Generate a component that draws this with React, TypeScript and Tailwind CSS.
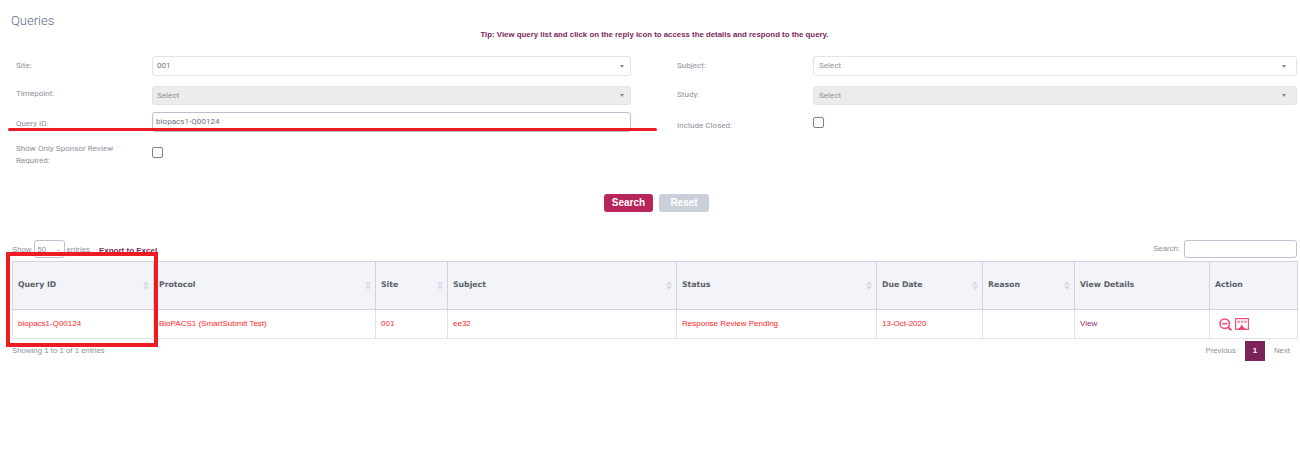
const columns = [
  { name: "Query ID", width: "w-[141px]", sort: true },
  { name: "Protocol", width: "w-[222px]", sort: true },
  { name: "Site", width: "w-[72px]", sort: true },
  { name: "Subject", width: "w-[229px]", sort: true },
  { name: "Status", width: "w-[200px]", sort: true },
  { name: "Due Date", width: "w-[106px]", sort: true },
  { name: "Reason", width: "w-[92px]", sort: true },
  { name: "View Details", width: "w-[135px]", sort: false },
  { name: "Action", width: "w-[88px]", sort: false },
];

const row = ["biopacs1-Q00124", "BioPACS1 (SmartSubmit Test)", "001", "ee32", "Response Review Pending", "13-Oct-2020", ""];

function SelectBox({ value, disabled, muted, wide }: { value: string; disabled?: boolean; muted?: boolean; wide?: boolean }) {
  return (
    <div
      className={`flex h-full items-center justify-between rounded-[3px] border border-[#e1e3e8] text-[8px] ${
        disabled ? "bg-[#ececec]" : "bg-white"
      } ${muted ? "text-[#8b909a]" : "text-[#6d7280]"} ${wide ? "pl-[5px] pr-[10px]" : "pl-[4px] pr-[6px]"}`}
    >
      <span>{value}</span>
      <span className="h-0 w-0 border-x-[2.5px] border-t-[3px] border-x-transparent border-t-[#888]" />
    </div>
  );
}

function CheckBox() {
  return <div className="h-[11px] w-[11px] rounded-[2px] border border-[#7b818c] bg-white" />;
}

function SortArrows() {
  return (
    <span className="flex flex-col gap-[1px]">
      <span className="h-0 w-0 border-x-[3px] border-b-[4px] border-x-transparent border-b-[#d9dce2]" />
      <span className="h-0 w-0 border-x-[3px] border-t-[4px] border-x-transparent border-t-[#d9dce2]" />
    </span>
  );
}

function ZoomOutIcon() {
  return (
    <svg width="13" height="13" viewBox="0 0 13 13" fill="none" stroke="#ee4d75">
      <circle cx="5.7" cy="5.7" r="4.7" strokeWidth="1.6" />
      <path d="M3.2 5.7h5" strokeWidth="1.6" />
      <path d="M9 9l3.200 3.200" strokeWidth="2.2" />
    </svg>
  );
}

function PdfIcon() {
  return (
    <svg width="14" height="12" viewBox="0 0 14 12">
      <rect width="14" height="12" fill="#f0517a" />
      <rect x="1.200" y="1.200" width="11.600" height="9.600" fill="#fff" />
      <path d="M2.500 2.500h2.500v2.500H2.500zM5.800 2.500h2.500v2.500H5.800zM9.100 2.500h2.500v2.500H9.100z" fill="#f49ab3" />
      <path d="M2.500 11c2.300-.7 3.500-2.500 4.200-5 .8 2.500 2.300 4.300 4.800 5z" fill="#ee3f6c" />
    </svg>
  );
}

export default function App() {
  return (
    <div className="relative h-[467px] w-[1300px] overflow-hidden bg-white font-['Roboto',sans-serif]">
      <h1 className="pl-[11px] pt-[13px] text-[13px] font-light leading-[16px] text-[#5b6b8c]">Queries</h1>
      <p className="pl-[9px] text-center font-['Liberation_Sans',sans-serif] text-[7.840px] font-bold leading-[12px] text-[#7b1f5e]">
        Tip: View query list and click on the reply icon to access the details and respond to the query.
      </p>

      <div className="mt-[15px] grid grid-cols-[136px_479px_46px_136px_484px] grid-rows-[30px_26px_34px_34px] pl-[16px] text-[8px] tracking-[0.05px] text-[#8a8f99]">
        <label className="pt-[5px] leading-[10px]">Site:</label>
        <div className="h-[20px]">
          <SelectBox value="001" />
        </div>
        <span />
        <label className="pt-[5px] leading-[10px]">Subject:</label>
        <div className="h-[20px]">
          <SelectBox value="Select" muted wide />
        </div>

        <label className="pt-[3px] leading-[10px]">Timepoint:</label>
        <div className="h-[19px]">
          <SelectBox value="Select" disabled muted />
        </div>
        <span />
        <label className="pt-[4px] leading-[10px]">Study:</label>
        <div className="h-[19px]">
          <SelectBox value="Select" disabled muted wide />
        </div>

        <label className="pt-[7px] leading-[10px]">Query ID:</label>
        <div className="flex h-[20px] items-center rounded-[3px] border border-[#b9c0d0] pl-[3px] text-[8px] text-[#6d7280]">
          biopacs1-Q00124
        </div>
        <span />
        <label className="pt-[9px] leading-[10px]">Include Closed:</label>
        <div className="pt-[5px]">
          <CheckBox />
        </div>

        <label className="mt-[-3px] w-[100px] leading-[12px]">Show Only Sponsor Review Required:</label>
        <div className="pt-[1px]">
          <CheckBox />
        </div>
      </div>

      <div className="mt-[14px] flex justify-center gap-[6px] pl-[13px] font-['Liberation_Sans',sans-serif] text-[10px] font-bold leading-[18px] text-white">
        <button className="h-[18px] w-[49px] rounded-[3px] bg-[#b8255a]">Search</button>
        <button className="h-[18px] w-[50px] rounded-[3px] bg-[#c9d0da]">Reset</button>
      </div>

      <div className="mt-[28px] flex h-[18px] items-center justify-between pl-[12px] pr-[3px] font-['Liberation_Sans',sans-serif] text-[7.800px] text-[#8a8f99]">
        <div className="flex items-center">
          <span className="pt-[1px]">Show</span>
          <div className="ml-[2px] flex h-[18px] w-[31px] items-center justify-between rounded-[3px] border border-[#bcc3d0] px-[3px] pt-[1px]">
            <span>50</span>
            <span className="text-[6px]">⌄</span>
          </div>
          <span className="ml-[2px] pt-[1px]">entries</span>
          <span className="ml-[9px] pt-[3px] text-[8px] font-bold text-[#7b1f5e]">Export to Excel</span>
        </div>
        <div className="flex items-center gap-[4px]">
          <span>Search:</span>
          <div className="h-[18px] w-[113px] rounded-[3px] border border-[#bcc3d0]" />
        </div>
      </div>

      <table className="ml-[12px] mt-[3px] w-[1285px] table-fixed border-collapse text-[8px]">
        <thead>
          <tr className="h-[48px] bg-[#f2f4f9]">
            {columns.map((c) => (
              <th
                key={c.name}
                className={`${c.width} border border-[#cfd3dd] pb-[1px] pl-[5px] pr-[4px] text-left font-['DejaVu_Sans',sans-serif] text-[7.750px] font-bold text-[#5a5e68]`}
              >
                <div className="flex items-center justify-between">
                  <span>{c.name}</span>
                  {c.sort && <SortArrows />}
                </div>
              </th>
            ))}
          </tr>
        </thead>
        <tbody>
          <tr className="h-[29px] font-['Liberation_Sans',sans-serif] text-[#ff1f1f]">
            {row.map((cell, i) => (
              <td key={i} className="border border-[#dfe2e9] px-[5px]">
                {cell}
              </td>
            ))}
            <td className="border border-[#dfe2e9] px-[5px] text-[#8c2b6b]">View</td>
            <td className="border border-[#dfe2e9] px-[9px]">
              <div className="flex items-center gap-[3px]">
                <ZoomOutIcon />
                <PdfIcon />
              </div>
            </td>
          </tr>
        </tbody>
      </table>

      <div className="mt-[2px] flex items-center justify-between pl-[12px] pr-[10px] font-['Liberation_Sans',sans-serif] text-[7.840px] text-[#8a8f99]">
        <span>Showing 1 to 1 of 1 entries</span>
        <div className="flex items-center">
          <span>Previous</span>
          <span className="mx-[9px] flex h-[20px] w-[20px] items-center justify-center bg-[#7b2459] font-bold text-white">1</span>
          <span>Next</span>
        </div>
      </div>

      <div className="absolute left-[8px] top-[128px] h-[3px] w-[649px] rounded-full bg-[#ed1c24]" />
      <div className="absolute left-[6px] top-[252px] h-[95px] w-[152px] border-[4px] border-[#ed1c24]" />
    </div>
  );
}
